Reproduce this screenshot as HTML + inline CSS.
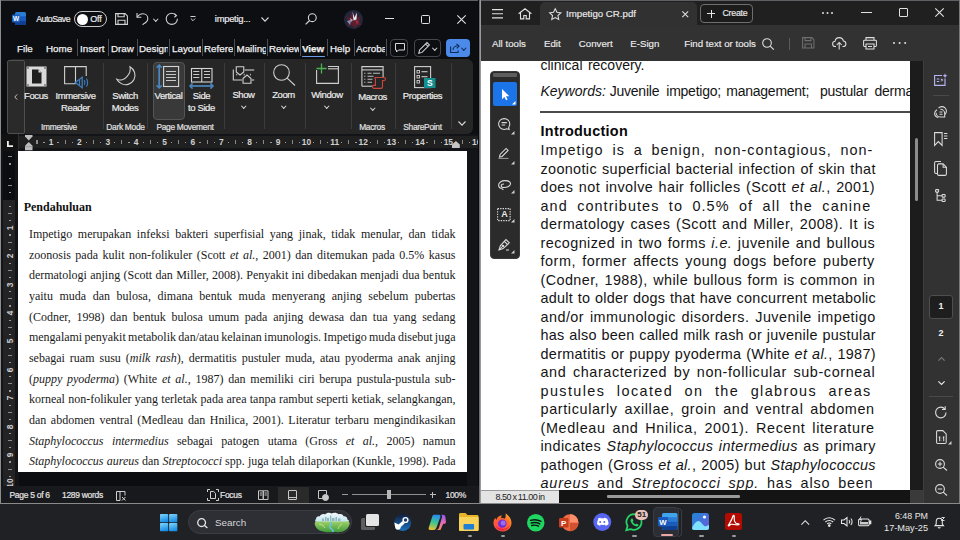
<!DOCTYPE html>
<html><head><meta charset="utf-8">
<style>
*{margin:0;padding:0;box-sizing:border-box}
html,body{width:960px;height:540px;overflow:hidden;background:#000}
body{position:relative;font-family:"Liberation Sans",sans-serif}
.a{position:absolute}
svg{position:absolute;overflow:visible}
/* WORD */
#word{left:0;top:0;width:480px;height:503px;background:#0c0e12;overflow:hidden}
.wt{position:absolute;color:#ececec;font-size:8.5px;white-space:nowrap;line-height:12px;-webkit-text-stroke:0.2px #ececec}
.tab{position:absolute;top:42px;height:13px;font-size:9.8px;line-height:13px;color:#f0f0f0;white-space:nowrap;overflow:hidden;-webkit-text-stroke:0.25px #f0f0f0}
.tsep{position:absolute;top:39px;width:1px;height:17px;background:#4c4e52}
.tbtn{position:absolute;top:39px;height:18px;border:1px solid #45474b;border-radius:4px}
#ribbon{left:7px;top:59px;width:466px;height:75px;background:#262626;border-radius:6px}
.rl{position:absolute;font-size:9.5px;letter-spacing:-0.4px;margin-top:-0.3px;line-height:12px;color:#ececec;-webkit-text-stroke:0.2px #ececec;white-space:nowrap;text-align:center;width:60px}
.gl{position:absolute;font-size:8.4px;letter-spacing:-0.3px;margin-top:-0.25px;line-height:11px;color:#e0e0e0;-webkit-text-stroke:0.2px #e0e0e0;white-space:nowrap;text-align:center;top:121.8px;width:90px}
.rsep{position:absolute;top:63px;width:1px;height:66px;background:#3c3c3c}
.chev{position:absolute;width:4px;height:4px;border-right:1px solid #d8d8d8;border-bottom:1px solid #d8d8d8;transform:rotate(45deg)}
#page{left:18px;top:151px;width:448.5px;height:321.3px;background:#fff;overflow:hidden}
.wl{position:absolute;left:10.9px;width:426.6px;font-family:"Liberation Serif",serif;font-size:12px;color:#1a1a1a;white-space:nowrap;text-align:justify;text-align-last:justify;line-height:15px}
.ws{position:absolute;font-size:8.5px;letter-spacing:-0.3px;line-height:11px;color:#e4e4e4;-webkit-text-stroke:0.2px #e4e4e4;white-space:nowrap;top:489.9px}
/* ACROBAT */
#acro{left:480px;top:0;width:480px;height:503px;background:#323232;overflow:hidden}
#apage{left:1px;top:61px;width:429.4px;height:428.6px;background:#fff;overflow:hidden}
.al{position:absolute;left:59.5px;width:400px;font-size:14.4px;color:#141414;white-space:nowrap;line-height:16px}
.ut{position:absolute;color:#ececec;font-size:9.7px;white-space:nowrap;line-height:13px;-webkit-text-stroke:0.15px #ececec}
/* TASKBAR */
#task{left:0;top:503px;width:960px;height:37px;background:#202124}
</style></head><body>

<div id="word" class="a">
  <div class="a" style="left:0;top:0;width:480px;height:1px;background:#5f5f64"></div>
  <div class="a" style="left:0;top:0;width:1.1px;height:503px;background:#8c8c8c"></div>
  <!-- title bar -->
  <svg style="left:12px;top:12px" width="14" height="13" viewBox="0 0 14 13">
    <rect x="3" y="0" width="11" height="13" rx="1.5" fill="#2b7cd3"/>
    <rect x="3" y="4.3" width="11" height="4.4" fill="#185abd"/>
    <rect x="3" y="8.7" width="11" height="4.3" rx="1" fill="#103f91"/>
    <rect x="0" y="2.5" width="8" height="8" rx="1" fill="#1a5fc4"/>
    <text x="4" y="9.2" font-size="6.5" font-weight="bold" fill="#fff" text-anchor="middle" font-family="Liberation Sans">W</text>
  </svg>
  <div class="wt" style="left:36.3px;top:13.2px;font-size:8.7px;letter-spacing:-0.5px">AutoSave</div>
  <div class="a" style="left:74px;top:11px;width:33px;height:16px;border:1px solid #c8c8c8;border-radius:8px"></div>
  <div class="a" style="left:76.5px;top:13.5px;width:11px;height:11px;border-radius:50%;background:#fff"></div>
  <div class="wt" style="left:90.3px;top:13.2px;font-size:9px;letter-spacing:-0.2px">Off</div>
  <svg style="left:115px;top:12.5px" width="13" height="12" viewBox="0 0 13 12" fill="none" stroke="#d0d0d0" stroke-width="1.1">
    <path d="M0.6 0.6h9.5l2.3 2.3v8.5H0.6z"/><path d="M3 0.6v3.2h6.2V0.6"/><path d="M3 11.4V7.2h7v4.2"/>
  </svg>
  <svg style="left:136px;top:12px" width="13" height="13" viewBox="0 0 13 13" fill="none" stroke="#d0d0d0" stroke-width="1.1">
    <path d="M1 1v4.3h4.3"/><path d="M1.2 5.2C2.5 3 4.5 1.8 7 1.8c2.8 0 4.8 2.1 4.8 4.6 0 2.2-1.5 3.9-3.6 5l-1.6 1.3"/>
  </svg>
  <div class="chev" style="left:154px;top:16.5px;width:3.5px;height:3.5px"></div>
  <svg style="left:165px;top:12px" width="14" height="13" viewBox="0 0 14 13" fill="none" stroke="#d0d0d0" stroke-width="1.1">
    <path d="M9.5 1.5l2 2.2-2.2 1.6"/><path d="M11.3 3.6C10.2 2.2 8.7 1.3 6.8 1.3 3.8 1.3 1.2 3.6 1.2 6.8s2.5 5.6 5.6 5.6 5.6-2.4 5.6-5.6"/>
  </svg>
  <svg style="left:190px;top:16px" width="6" height="6" viewBox="0 0 6 6" fill="none" stroke="#d0d0d0" stroke-width="1">
    <path d="M0.5 0.5h5"/><path d="M0.8 2.5l2.2 2.2 2.2-2.2"/>
  </svg>
  <div class="wt" style="left:214.8px;top:13.2px;font-size:9.4px;letter-spacing:-0.25px">impetig...</div>
  <svg style="left:261px;top:17px" width="8" height="5" viewBox="0 0 8 5" fill="none" stroke="#d8d8d8" stroke-width="1.1"><path d="M0.5 0.5l3.5 3.6 3.5-3.6"/></svg>
  <svg style="left:305px;top:13px" width="12" height="12" viewBox="0 0 12 12" fill="none" stroke="#d8d8d8" stroke-width="1.1">
    <circle cx="7.3" cy="4.7" r="3.9"/><path d="M4.6 7.5L0.6 11.4"/>
  </svg>
  <svg style="left:343.5px;top:9.5px" width="19" height="19" viewBox="0 0 19 19">
    <circle cx="9.5" cy="9.5" r="9.5" fill="#23263a"/>
    <path d="M2 6l4 2 1-5 3 4 2-5 1 6 4-2-2 6 3 3-5 0-2 4-3-4-4 1 1-4z" fill="#5a1e2c"/>
    <path d="M8.5 1.5l2 6 2.5-5-0.5 7-3 1z" fill="#e8e8f2"/>
    <path d="M3 11l4-1-1 5z" fill="#8890b8"/>
    <path d="M11 10l4 1-2 4z" fill="#9a2a3c"/>
    <path d="M6 8l3 2-2 2z" fill="#c8ccdc" opacity="0.8"/>
  </svg>
  <div class="a" style="left:385px;top:18px;width:8.5px;height:1px;background:#e0e0e0"></div>
  <div class="a" style="left:421px;top:15px;width:8.5px;height:8.5px;border:1px solid #e0e0e0;border-radius:1.5px"></div>
  <svg style="left:456.5px;top:14.5px" width="9" height="9" viewBox="0 0 9 9" fill="none" stroke="#e6e6e6" stroke-width="1.05"><path d="M0.3 0.3l8.4 8.4M8.7 0.3L0.3 8.7"/></svg>

  <!-- tabs -->
  <div class="tab" style="left:17px;width:20px">File</div>
  <div class="tab" style="left:46px;width:29px">Home</div>
  <div class="tsep" style="left:76.5px"></div>
  <div class="tab" style="left:80px;width:27px">Insert</div>
  <div class="tsep" style="left:108px"></div>
  <div class="tab" style="left:111px;width:25px">Draw</div>
  <div class="tsep" style="left:136.5px"></div>
  <div class="tab" style="left:139px;width:29px">Design</div>
  <div class="tsep" style="left:169px"></div>
  <div class="tab" style="left:172px;width:29px">Layout</div>
  <div class="tsep" style="left:202px"></div>
  <div class="tab" style="left:204px;width:29px">References</div>
  <div class="tsep" style="left:234px"></div>
  <div class="tab" style="left:236.5px;width:29px">Mailings</div>
  <div class="tsep" style="left:266.5px"></div>
  <div class="tab" style="left:269px;width:29.5px">Review</div>
  <div class="tsep" style="left:299.5px"></div>
  <div class="tab" style="left:302px;width:24px;font-weight:bold">View</div>
  <div class="a" style="left:302px;top:55.5px;width:22.5px;height:1.6px;background:#6c9be8;border-radius:1px"></div>
  <div class="tsep" style="left:326.5px"></div>
  <div class="tab" style="left:330px;width:23px">Help</div>
  <div class="tsep" style="left:353.5px"></div>
  <div class="tab" style="left:356px;width:29px">Acrobat</div>
  <div class="tsep" style="left:386px"></div>
  <div class="tbtn" style="left:390px;width:18px"></div>
  <svg style="left:394.5px;top:43px" width="10" height="10" viewBox="0 0 10 10" fill="none" stroke="#d8d8d8" stroke-width="1"><path d="M0.5 0.5h9v6.5H3.5L1.5 9V7H0.5z"/></svg>
  <div class="tbtn" style="left:414px;width:27px"></div>
  <svg style="left:417.5px;top:42px" width="12" height="12" viewBox="0 0 12 12" fill="none" stroke="#d8d8d8" stroke-width="1.05"><path d="M0.8 11.2l0.8-3.3L9 0.6l2.4 2.4-7.4 7.4z"/><path d="M7.6 2l2.4 2.4"/></svg>
  <div class="chev" style="left:433px;top:46px;width:3.5px;height:3.5px"></div>
  <div class="a" style="left:446px;top:39px;width:24px;height:18px;background:#4b8ae8;border-radius:4px"></div>
  <svg style="left:449.5px;top:42.5px" width="10" height="10" viewBox="0 0 10 10" fill="none" stroke="#0e2a5a" stroke-width="1.1"><path d="M0.6 3.5v6h7.5v-2"/><path d="M3 7c0-2.5 2-4 4.5-4"/><path d="M6.5 1l2.6 2.1-2.3 2.3"/></svg>
  <div class="chev" style="left:462px;top:46px;width:3.5px;height:3.5px;border-color:#0e2a5a"></div>

  <!-- ribbon -->
  <div id="ribbon" class="a"></div>
  <div class="a" style="left:7px;top:59.5px;width:18px;height:74px;border:1px solid #505050;border-radius:2px;background:#2a2a2a"></div>
  <svg style="left:14px;top:93.5px" width="4" height="6" viewBox="0 0 4 6" fill="none" stroke="#d0d0d0" stroke-width="0.9"><path d="M3.2 0.4L0.8 3l2.4 2.6"/></svg>
  <!-- Focus -->
  <svg style="left:26px;top:66px" width="21" height="21" viewBox="0 0 21 21">
    <rect x="0.5" y="0.5" width="20" height="20" fill="#d9d9d9"/>
    <rect x="1.8" y="1.8" width="17.4" height="17.4" fill="#262626" opacity="0"/>
    <path d="M6 3.5h6.5l3 3v11H6z" fill="#1e1e1e" stroke="#d9d9d9" stroke-width="0"/>
    <path d="M12.5 3.5v3h3" fill="#d9d9d9"/>
    <circle cx="2" cy="2" r="1" fill="#7a7a7a"/><circle cx="19" cy="2" r="1" fill="#7a7a7a"/><circle cx="2" cy="19" r="1" fill="#7a7a7a"/><circle cx="19" cy="19" r="1" fill="#7a7a7a"/>
  </svg>
  <div class="rl" style="left:6px;top:90.5px">Focus</div>
  <!-- Immersive reader -->
  <svg style="left:64px;top:66px" width="25" height="23" viewBox="0 0 25 23" fill="none" stroke-width="1.1">
    <path d="M11.5 17.8H0.6V0.6h10.9v17.2" stroke="#cfcfcf"/>
    <path d="M11.5 0.6h10.7v9.5" stroke="#cfcfcf"/>
    <path d="M11.2 16.5l7-5.3v10.6z" stroke="#3c7cc0" stroke-width="1.3" fill="#262626"/>
    <path d="M15.5 14v5M20.2 14.2c0.9 1.3 0.9 3.3 0 4.6M22.4 12.5c1.6 2.2 1.6 6 0 8.2" stroke="#3c7cc0" stroke-width="1.2"/>
  </svg>
  <div class="rl" style="left:45.5px;top:90.5px">Immersive</div>
  <div class="rl" style="left:45.5px;top:102.5px">Reader</div>
  <div class="gl" style="left:14px">Immersive</div>
  <div class="rsep" style="left:103px"></div>
  <!-- Switch modes -->
  <svg style="left:115.5px;top:66px" width="21" height="21" viewBox="0 0 21 21" fill="none" stroke="#cfcfcf" stroke-width="1.1">
    <path d="M14 0.8c4.5 2.5 6.3 8.2 4 12.8-2.6 5-8.7 6.5-13 3.8C3 16.2 1.6 14.8 0.8 13.2c3.5 1.6 7.8 0.5 10.3-2.8C13.5 7.6 14.8 3.8 14 0.8z"/>
  </svg>
  <div class="rl" style="left:95px;top:90.5px">Switch</div>
  <div class="rl" style="left:95px;top:102.5px">Modes</div>
  <div class="gl" style="left:80.5px">Dark Mode</div>
  <div class="rsep" style="left:146.5px"></div>
  <!-- Vertical -->
  <div class="a" style="left:153px;top:62px;width:32px;height:58px;background:#393939;border:1px solid #555;border-radius:4px"></div>
  <svg style="left:156px;top:64px" width="24" height="25" viewBox="0 0 24 25" fill="none" stroke-width="1.1">
    <path d="M3.2 1v23" stroke="#4a88c0" stroke-width="1.7"/><path d="M0.6 3.6L3.2 1l2.6 2.6M0.6 21.4L3.2 24l2.6-2.6" stroke="#4a88c0" stroke-width="1.5"/>
    <rect x="7.6" y="2.5" width="15" height="20" stroke="#d4d4d4"/>
    <path d="M10 7.5h10M10 10.5h10M10 13.5h10M10 16.5h10" stroke="#c8c8c8" stroke-width="1"/>
  </svg>
  <div class="rl" style="left:138.5px;top:90.5px">Vertical</div>
  <!-- Side to side -->
  <svg style="left:189px;top:67px" width="25" height="22" viewBox="0 0 25 22" fill="none" stroke-width="1.1">
    <rect x="2.5" y="1.5" width="20.5" height="13.5" stroke="#d4d4d4"/><path d="M12.75 1.5v13.5" stroke="#d4d4d4"/>
    <path d="M4.3 4.5h6M4.3 7.5h6M4.3 10.5h6M15 4.5h6M15 7.5h6M15 10.5h6" stroke="#c8c8c8" stroke-width="1"/>
    <path d="M1 19h23" stroke="#4a88c0" stroke-width="1.7"/><path d="M3.6 16.4L1 19l2.6 2.6M21.4 16.4L24 19l-2.6 2.6" stroke="#4a88c0" stroke-width="1.5"/>
  </svg>
  <div class="rl" style="left:171.5px;top:90.5px">Side</div>
  <div class="rl" style="left:171.5px;top:102.5px">to Side</div>
  <div class="gl" style="left:140px">Page Movement</div>
  <div class="rsep" style="left:223.5px"></div>
  <!-- Show -->
  <svg style="left:232px;top:66px" width="23" height="19" viewBox="0 0 23 19" fill="none" stroke="#cfcfcf" stroke-width="1.1">
    <path d="M12.6 4H22.2"/><path d="M4.25 0.7h7.5V6L8 9 4.25 6z"/><path d="M1.3 3.6V14H10"/>
    <path d="M11 12.5l4-3.5 4 3.5v4.8h-8z"/><path d="M19.7 14H22.2"/><path d="M4.7 7.8v1.6M12.2 7.8v1.6M18.4 7.8v1.6" stroke-width="0.9"/>
  </svg>
  <div class="rl" style="left:213.5px;top:89px">Show</div>
  <div class="chev" style="left:241.5px;top:103.5px;width:3.5px;height:3.5px"></div>
  <div class="rsep" style="left:263.5px"></div>
  <!-- Zoom -->
  <svg style="left:273px;top:63.5px" width="23" height="22" viewBox="0 0 23 22" fill="none" stroke="#cfcfcf" stroke-width="1.1">
    <circle cx="8.5" cy="8.5" r="7.8"/><path d="M14.2 14.2l7.8 7.3"/>
  </svg>
  <div class="rl" style="left:253.5px;top:89px">Zoom</div>
  <div class="chev" style="left:281.5px;top:103.5px;width:3.5px;height:3.5px"></div>
  <div class="rsep" style="left:304.5px"></div>
  <!-- Window -->
  <svg style="left:315.8px;top:63px" width="23" height="21" viewBox="0 0 23 21" fill="none" stroke-width="1.1">
    <path d="M0.6 7v13.4h21.8V3.5H12" stroke="#cfcfcf"/><path d="M12 5.8h10.4" stroke="#cfcfcf"/>
    <path d="M5.5 0.5v10M0.5 5.5h10" stroke="#4caf50" stroke-width="1.3"/>
  </svg>
  <div class="rl" style="left:297px;top:89px">Window</div>
  <div class="chev" style="left:325px;top:103.5px;width:3.5px;height:3.5px"></div>
  <div class="rsep" style="left:350.5px"></div>
  <!-- Macros -->
  <svg style="left:361px;top:66px" width="25" height="23" viewBox="0 0 25 23" fill="none" stroke-width="1.1">
    <path d="M0.9 20.2V0.6h21.2v12" stroke="#cfcfcf"/><path d="M0.9 3.9h21.2" stroke="#cfcfcf"/><path d="M0.9 20.2h11" stroke="#cfcfcf"/>
    <path d="M3.2 7.3h1.2M6.5 7.3h4M12 7.3h7M3.2 10.3h1.2M6.5 10.3h6M3.2 13.3h1.2M6.5 13.3h5M3.2 16.3h1.2M6.5 16.3h4.5" stroke="#bdbdbd"/>
    <path d="M14 11.5h9a1.5 1.5 0 0 1 0 3h-1.5v6.2a1.6 1.6 0 0 1-1.6 1.6h-7a1.5 1.5 0 0 1 0-3h1.5v-6.2A1.6 1.6 0 0 1 14 11.5z" stroke="#c9473f" stroke-width="1.15" fill="#262626"/>
  </svg>
  <div class="rl" style="left:342.5px;top:91.5px">Macros</div>
  <div class="chev" style="left:370.5px;top:105.5px;width:3.5px;height:3.5px"></div>
  <div class="gl" style="left:327px">Macros</div>
  <div class="rsep" style="left:394.5px"></div>
  <!-- Properties -->
  <svg style="left:414px;top:66px" width="22" height="22" viewBox="0 0 22 22" fill="none" stroke-width="1.1">
    <rect x="0.6" y="0.6" width="16" height="21" stroke="#cfcfcf"/>
    <rect x="3" y="4.5" width="2.5" height="2.5" stroke="#cfcfcf" stroke-width="0.9"/><path d="M7.5 5.7h6" stroke="#cfcfcf"/>
    <rect x="3" y="9.5" width="2.5" height="2.5" stroke="#cfcfcf" stroke-width="0.9"/><path d="M7.5 10.7h6" stroke="#cfcfcf"/>
    <rect x="3" y="14.5" width="2.5" height="2.5" stroke="#cfcfcf" stroke-width="0.9"/>
    <rect x="10" y="12" width="11.5" height="10" fill="#138f8f" stroke="none"/>
    <text x="15.8" y="20.3" font-size="8.5" font-weight="bold" fill="#fff" text-anchor="middle" font-family="Liberation Sans" stroke="none">S</text>
  </svg>
  <div class="rl" style="left:392.5px;top:90.5px">Properties</div>
  <div class="gl" style="left:377.5px">SharePoint</div>
  <div class="rsep" style="left:450.5px"></div>
  <svg style="left:458px;top:121px" width="8" height="5" viewBox="0 0 8 5" fill="none" stroke="#d8d8d8" stroke-width="1.1"><path d="M0.5 0.5l3.5 3.6 3.5-3.6"/></svg>

  <!-- ruler -->
<div class="a" style="left:1px;top:134px;width:478px;height:17px;background:#131417"></div>
<div class="a" style="left:19px;top:136.3px;width:460px;height:12.1px;background:#202020"></div>
<div class="a" style="left:1.3px;top:134px;width:16.8px;height:16.8px;background:#121212"></div>
<svg style="left:6.5px;top:141px" width="6" height="6" viewBox="0 0 6 6"><path d="M0 0h1.8v4.2H6V6H0z" fill="#f0f0f0"/></svg>
<div class="a" style="left:18.3px;top:134px;width:0.8px;height:17px;background:#2e2e2e"></div>
<div class="a" style="left:36.29px;top:140.2px;width:1px;height:4.2px;background:#8a8a8a"></div>
<div class="a" style="left:43.29px;top:141.8px;width:1.2px;height:1.2px;background:#9a9a9a"></div>
<div class="a" style="left:44.98px;top:138.3px;width:12px;text-align:center;font-size:8.4px;line-height:8px;color:#d0d0d0;font-weight:bold">1</div>
<div class="a" style="left:57.48px;top:141.8px;width:1.2px;height:1.2px;background:#9a9a9a"></div>
<div class="a" style="left:64.67px;top:140.2px;width:1px;height:4.2px;background:#8a8a8a"></div>
<div class="a" style="left:71.67px;top:141.8px;width:1.2px;height:1.2px;background:#9a9a9a"></div>
<div class="a" style="left:73.36px;top:138.3px;width:12px;text-align:center;font-size:8.4px;line-height:8px;color:#d0d0d0;font-weight:bold">2</div>
<div class="a" style="left:85.86px;top:141.8px;width:1.2px;height:1.2px;background:#9a9a9a"></div>
<div class="a" style="left:93.05px;top:140.2px;width:1px;height:4.2px;background:#8a8a8a"></div>
<div class="a" style="left:100.05px;top:141.8px;width:1.2px;height:1.2px;background:#9a9a9a"></div>
<div class="a" style="left:101.74px;top:138.3px;width:12px;text-align:center;font-size:8.4px;line-height:8px;color:#d0d0d0;font-weight:bold">3</div>
<div class="a" style="left:114.24px;top:141.8px;width:1.2px;height:1.2px;background:#9a9a9a"></div>
<div class="a" style="left:121.43px;top:140.2px;width:1px;height:4.2px;background:#8a8a8a"></div>
<div class="a" style="left:128.43px;top:141.8px;width:1.2px;height:1.2px;background:#9a9a9a"></div>
<div class="a" style="left:130.12px;top:138.3px;width:12px;text-align:center;font-size:8.4px;line-height:8px;color:#d0d0d0;font-weight:bold">4</div>
<div class="a" style="left:142.62px;top:141.8px;width:1.2px;height:1.2px;background:#9a9a9a"></div>
<div class="a" style="left:149.81px;top:140.2px;width:1px;height:4.2px;background:#8a8a8a"></div>
<div class="a" style="left:156.81px;top:141.8px;width:1.2px;height:1.2px;background:#9a9a9a"></div>
<div class="a" style="left:158.50px;top:138.3px;width:12px;text-align:center;font-size:8.4px;line-height:8px;color:#d0d0d0;font-weight:bold">5</div>
<div class="a" style="left:171.00px;top:141.8px;width:1.2px;height:1.2px;background:#9a9a9a"></div>
<div class="a" style="left:178.19px;top:140.2px;width:1px;height:4.2px;background:#8a8a8a"></div>
<div class="a" style="left:185.19px;top:141.8px;width:1.2px;height:1.2px;background:#9a9a9a"></div>
<div class="a" style="left:186.88px;top:138.3px;width:12px;text-align:center;font-size:8.4px;line-height:8px;color:#d0d0d0;font-weight:bold">6</div>
<div class="a" style="left:199.38px;top:141.8px;width:1.2px;height:1.2px;background:#9a9a9a"></div>
<div class="a" style="left:206.57px;top:140.2px;width:1px;height:4.2px;background:#8a8a8a"></div>
<div class="a" style="left:213.56px;top:141.8px;width:1.2px;height:1.2px;background:#9a9a9a"></div>
<div class="a" style="left:215.26px;top:138.3px;width:12px;text-align:center;font-size:8.4px;line-height:8px;color:#d0d0d0;font-weight:bold">7</div>
<div class="a" style="left:227.75px;top:141.8px;width:1.2px;height:1.2px;background:#9a9a9a"></div>
<div class="a" style="left:234.95px;top:140.2px;width:1px;height:4.2px;background:#8a8a8a"></div>
<div class="a" style="left:241.94px;top:141.8px;width:1.2px;height:1.2px;background:#9a9a9a"></div>
<div class="a" style="left:243.64px;top:138.3px;width:12px;text-align:center;font-size:8.4px;line-height:8px;color:#d0d0d0;font-weight:bold">8</div>
<div class="a" style="left:256.13px;top:141.8px;width:1.2px;height:1.2px;background:#9a9a9a"></div>
<div class="a" style="left:263.33px;top:140.2px;width:1px;height:4.2px;background:#8a8a8a"></div>
<div class="a" style="left:270.32px;top:141.8px;width:1.2px;height:1.2px;background:#9a9a9a"></div>
<div class="a" style="left:272.02px;top:138.3px;width:12px;text-align:center;font-size:8.4px;line-height:8px;color:#d0d0d0;font-weight:bold">9</div>
<div class="a" style="left:284.51px;top:141.8px;width:1.2px;height:1.2px;background:#9a9a9a"></div>
<div class="a" style="left:291.71px;top:140.2px;width:1px;height:4.2px;background:#8a8a8a"></div>
<div class="a" style="left:298.70px;top:141.8px;width:1.2px;height:1.2px;background:#9a9a9a"></div>
<div class="a" style="left:300.40px;top:138.3px;width:12px;text-align:center;font-size:8.4px;line-height:8px;color:#d0d0d0;font-weight:bold">10</div>
<div class="a" style="left:312.90px;top:141.8px;width:1.2px;height:1.2px;background:#9a9a9a"></div>
<div class="a" style="left:320.09px;top:140.2px;width:1px;height:4.2px;background:#8a8a8a"></div>
<div class="a" style="left:327.09px;top:141.8px;width:1.2px;height:1.2px;background:#9a9a9a"></div>
<div class="a" style="left:328.78px;top:138.3px;width:12px;text-align:center;font-size:8.4px;line-height:8px;color:#d0d0d0;font-weight:bold">11</div>
<div class="a" style="left:341.28px;top:141.8px;width:1.2px;height:1.2px;background:#9a9a9a"></div>
<div class="a" style="left:348.47px;top:140.2px;width:1px;height:4.2px;background:#8a8a8a"></div>
<div class="a" style="left:355.47px;top:141.8px;width:1.2px;height:1.2px;background:#9a9a9a"></div>
<div class="a" style="left:357.16px;top:138.3px;width:12px;text-align:center;font-size:8.4px;line-height:8px;color:#d0d0d0;font-weight:bold">12</div>
<div class="a" style="left:369.66px;top:141.8px;width:1.2px;height:1.2px;background:#9a9a9a"></div>
<div class="a" style="left:376.85px;top:140.2px;width:1px;height:4.2px;background:#8a8a8a"></div>
<div class="a" style="left:383.85px;top:141.8px;width:1.2px;height:1.2px;background:#9a9a9a"></div>
<div class="a" style="left:385.54px;top:138.3px;width:12px;text-align:center;font-size:8.4px;line-height:8px;color:#d0d0d0;font-weight:bold">13</div>
<div class="a" style="left:398.04px;top:141.8px;width:1.2px;height:1.2px;background:#9a9a9a"></div>
<div class="a" style="left:405.23px;top:140.2px;width:1px;height:4.2px;background:#8a8a8a"></div>
<div class="a" style="left:412.23px;top:141.8px;width:1.2px;height:1.2px;background:#9a9a9a"></div>
<div class="a" style="left:413.92px;top:138.3px;width:12px;text-align:center;font-size:8.4px;line-height:8px;color:#d0d0d0;font-weight:bold">14</div>
<div class="a" style="left:426.42px;top:141.8px;width:1.2px;height:1.2px;background:#9a9a9a"></div>
<div class="a" style="left:433.61px;top:140.2px;width:1px;height:4.2px;background:#8a8a8a"></div>
<div class="a" style="left:440.61px;top:141.8px;width:1.2px;height:1.2px;background:#9a9a9a"></div>
<div class="a" style="left:442.30px;top:138.3px;width:12px;text-align:center;font-size:8.4px;line-height:8px;color:#d0d0d0;font-weight:bold">15</div>
<div class="a" style="left:454.80px;top:141.8px;width:1.2px;height:1.2px;background:#9a9a9a"></div>
<div class="a" style="left:461.99px;top:140.2px;width:1px;height:4.2px;background:#8a8a8a"></div>
<div class="a" style="left:468.99px;top:141.8px;width:1.2px;height:1.2px;background:#9a9a9a"></div>
<div class="a" style="left:470.68px;top:138.3px;width:12px;text-align:center;font-size:8.4px;line-height:8px;color:#d0d0d0;font-weight:bold">16</div>
<div class="a" style="left:36.8px;top:140.2px;width:1px;height:4.2px;background:#8a8a8a"></div>
<div class="a" style="left:43.4px;top:141.8px;width:1.2px;height:1.2px;background:#9a9a9a"></div>
<svg style="left:25px;top:135.4px" width="7.5" height="15.2" viewBox="0 0 7.5 15.2"><path d="M0 0h7.5v1.5L3.75 5.6 0 1.5z" fill="#bdbdbd"/><path d="M3.75 7L7.5 10.8v4.4H0v-4.4z" fill="#bdbdbd"/><rect x="0" y="11.5" width="7.5" height="0.6" fill="#8a8a8a"/></svg>
<svg style="left:451.6px;top:141px" width="7.8" height="7" viewBox="0 0 7.8 7"><path d="M3.9 0L7.8 3.5V7H0V3.5z" fill="#c4c4c4"/></svg>
<div class="a" style="left:1px;top:151px;width:17.5px;height:335px;background:#131417"></div>
<div class="a" style="left:3px;top:151px;width:12.2px;height:48.5px;background:#0c0d10"></div>
<div class="a" style="left:3px;top:199.5px;width:12.2px;height:286.5px;background:#232323"></div>
<div class="a" style="left:8px;top:156.43px;width:4px;height:1px;background:#8a8a8a"></div>
<div class="a" style="left:9.4px;top:163.43px;width:1.2px;height:1.2px;background:#9a9a9a"></div>
<div class="a" style="left:9.4px;top:177.62px;width:1.2px;height:1.2px;background:#9a9a9a"></div>
<div class="a" style="left:8px;top:184.81px;width:4px;height:1px;background:#8a8a8a"></div>
<div class="a" style="left:9.4px;top:191.81px;width:1.2px;height:1.2px;background:#9a9a9a"></div>
<div class="a" style="left:9.4px;top:206.00px;width:1.2px;height:1.2px;background:#9a9a9a"></div>
<div class="a" style="left:8px;top:213.19px;width:4px;height:1px;background:#8a8a8a"></div>
<div class="a" style="left:9.4px;top:220.19px;width:1.2px;height:1.2px;background:#9a9a9a"></div>
<div class="a" style="left:4px;top:221.88px;width:12px;height:12px;display:flex;align-items:center;justify-content:center"><div style="transform:rotate(-90deg);font-size:8.4px;line-height:8px;color:#d0d0d0;font-weight:bold">1</div></div>
<div class="a" style="left:9.4px;top:234.38px;width:1.2px;height:1.2px;background:#9a9a9a"></div>
<div class="a" style="left:8px;top:241.57px;width:4px;height:1px;background:#8a8a8a"></div>
<div class="a" style="left:9.4px;top:248.56px;width:1.2px;height:1.2px;background:#9a9a9a"></div>
<div class="a" style="left:4px;top:250.26px;width:12px;height:12px;display:flex;align-items:center;justify-content:center"><div style="transform:rotate(-90deg);font-size:8.4px;line-height:8px;color:#d0d0d0;font-weight:bold">2</div></div>
<div class="a" style="left:9.4px;top:262.75px;width:1.2px;height:1.2px;background:#9a9a9a"></div>
<div class="a" style="left:8px;top:269.95px;width:4px;height:1px;background:#8a8a8a"></div>
<div class="a" style="left:9.4px;top:276.94px;width:1.2px;height:1.2px;background:#9a9a9a"></div>
<div class="a" style="left:4px;top:278.64px;width:12px;height:12px;display:flex;align-items:center;justify-content:center"><div style="transform:rotate(-90deg);font-size:8.4px;line-height:8px;color:#d0d0d0;font-weight:bold">3</div></div>
<div class="a" style="left:9.4px;top:291.13px;width:1.2px;height:1.2px;background:#9a9a9a"></div>
<div class="a" style="left:8px;top:298.33px;width:4px;height:1px;background:#8a8a8a"></div>
<div class="a" style="left:9.4px;top:305.32px;width:1.2px;height:1.2px;background:#9a9a9a"></div>
<div class="a" style="left:4px;top:307.02px;width:12px;height:12px;display:flex;align-items:center;justify-content:center"><div style="transform:rotate(-90deg);font-size:8.4px;line-height:8px;color:#d0d0d0;font-weight:bold">4</div></div>
<div class="a" style="left:9.4px;top:319.51px;width:1.2px;height:1.2px;background:#9a9a9a"></div>
<div class="a" style="left:8px;top:326.71px;width:4px;height:1px;background:#8a8a8a"></div>
<div class="a" style="left:9.4px;top:333.70px;width:1.2px;height:1.2px;background:#9a9a9a"></div>
<div class="a" style="left:4px;top:335.40px;width:12px;height:12px;display:flex;align-items:center;justify-content:center"><div style="transform:rotate(-90deg);font-size:8.4px;line-height:8px;color:#d0d0d0;font-weight:bold">5</div></div>
<div class="a" style="left:9.4px;top:347.89px;width:1.2px;height:1.2px;background:#9a9a9a"></div>
<div class="a" style="left:8px;top:355.09px;width:4px;height:1px;background:#8a8a8a"></div>
<div class="a" style="left:9.4px;top:362.08px;width:1.2px;height:1.2px;background:#9a9a9a"></div>
<div class="a" style="left:4px;top:363.78px;width:12px;height:12px;display:flex;align-items:center;justify-content:center"><div style="transform:rotate(-90deg);font-size:8.4px;line-height:8px;color:#d0d0d0;font-weight:bold">6</div></div>
<div class="a" style="left:9.4px;top:376.27px;width:1.2px;height:1.2px;background:#9a9a9a"></div>
<div class="a" style="left:8px;top:383.47px;width:4px;height:1px;background:#8a8a8a"></div>
<div class="a" style="left:9.4px;top:390.46px;width:1.2px;height:1.2px;background:#9a9a9a"></div>
<div class="a" style="left:4px;top:392.16px;width:12px;height:12px;display:flex;align-items:center;justify-content:center"><div style="transform:rotate(-90deg);font-size:8.4px;line-height:8px;color:#d0d0d0;font-weight:bold">7</div></div>
<div class="a" style="left:9.4px;top:404.65px;width:1.2px;height:1.2px;background:#9a9a9a"></div>
<div class="a" style="left:8px;top:411.85px;width:4px;height:1px;background:#8a8a8a"></div>
<div class="a" style="left:9.4px;top:418.84px;width:1.2px;height:1.2px;background:#9a9a9a"></div>
<div class="a" style="left:4px;top:420.54px;width:12px;height:12px;display:flex;align-items:center;justify-content:center"><div style="transform:rotate(-90deg);font-size:8.4px;line-height:8px;color:#d0d0d0;font-weight:bold">8</div></div>
<div class="a" style="left:9.4px;top:433.03px;width:1.2px;height:1.2px;background:#9a9a9a"></div>
<div class="a" style="left:8px;top:440.23px;width:4px;height:1px;background:#8a8a8a"></div>
<div class="a" style="left:9.4px;top:447.22px;width:1.2px;height:1.2px;background:#9a9a9a"></div>
<div class="a" style="left:4px;top:448.92px;width:12px;height:12px;display:flex;align-items:center;justify-content:center"><div style="transform:rotate(-90deg);font-size:8.4px;line-height:8px;color:#d0d0d0;font-weight:bold">9</div></div>
<div class="a" style="left:9.4px;top:461.41px;width:1.2px;height:1.2px;background:#9a9a9a"></div>
<div class="a" style="left:8px;top:468.61px;width:4px;height:1px;background:#8a8a8a"></div>
<div class="a" style="left:9.4px;top:475.60px;width:1.2px;height:1.2px;background:#9a9a9a"></div>
<div class="a" style="left:4px;top:477.30px;width:12px;height:12px;display:flex;align-items:center;justify-content:center"><div style="transform:rotate(-90deg);font-size:8.4px;line-height:8px;color:#d0d0d0;font-weight:bold">10</div></div>
<div class="a" style="left:466.2px;top:151px;width:12.8px;height:335px;background:#131417"></div>
<div class="a" style="left:18.5px;top:473px;width:448px;height:13px;background:#0c0d10"></div>
<div class="a" style="left:478.1px;top:0px;width:0.9px;height:503px;background:#08090c"></div><div class="a" style="left:479px;top:0px;width:1px;height:503px;background:#6e6e73"></div>
  <div id="page" class="a">
  <div class="a" style="left:5.7px;top:48.5px;font-family:'Liberation Serif',serif;font-weight:bold;font-size:12px;color:#111;line-height:15px;white-space:nowrap">Pendahuluan</div>
<div class="wl" style="top:75.92px">Impetigo merupakan infeksi bakteri superfisial yang jinak, tidak menular, dan tidak</div>
<div class="wl" style="top:96.59px">zoonosis pada kulit non-folikuler (Scott <i>et al.</i>, 2001) dan ditemukan pada 0.5% kasus</div>
<div class="wl" style="top:117.26px">dermatologi anjing (Scott dan Miller, 2008). Penyakit ini dibedakan menjadi dua bentuk</div>
<div class="wl" style="top:137.93px">yaitu muda dan bulosa, dimana bentuk muda menyerang anjing sebelum pubertas</div>
<div class="wl" style="top:158.60px">(Codner, 1998) dan bentuk bulosa umum pada anjing dewasa dan tua yang sedang</div>
<div class="wl" style="top:179.27px;word-spacing:-0.75px">mengalami penyakit metabolik dan/atau kelainan imunologis. Impetigo muda disebut juga</div>
<div class="wl" style="top:199.94px">sebagai ruam susu (<i>milk rash</i>), dermatitis pustuler muda, atau pyoderma anak anjing</div>
<div class="wl" style="top:220.61px">(<i>puppy pyoderma</i>) (White <i>et al.</i>, 1987) dan memiliki ciri berupa pustula-pustula sub-</div>
<div class="wl" style="top:241.28px">korneal non-folikuler yang terletak pada area tanpa rambut seperti ketiak, selangkangan,</div>
<div class="wl" style="top:261.95px">dan abdomen ventral (Medleau dan Hnilica, 2001). Literatur terbaru mengindikasikan</div>
<div class="wl" style="top:282.62px"><i>Staphylococcus intermedius</i> sebagai patogen utama (Gross <i>et al.</i>, 2005) namun</div>
<div class="wl" style="top:303.29px"><i>Staphylococcus aureus</i> dan <i>Streptococci</i> spp. juga telah dilaporkan (Kunkle, 1998). Pada</div>

  </div>
  <div class="a" style="left:1px;top:486px;width:478px;height:17px;background:#18191c"></div>
  <div class="ws" style="left:9.5px">Page 5 of 6</div>
  <div class="ws" style="left:62px">1289 words</div>
  <svg style="left:116px;top:491px" width="12" height="10" viewBox="0 0 12 10" fill="none" stroke="#d0d0d0" stroke-width="1">
    <path d="M0.5 0.5h3.5v9H0.5z"/><path d="M4 0.5h5v4"/><path d="M6 6l3.5 3.5M9.5 6L6 9.5"/>
  </svg>
  <svg style="left:206.5px;top:489px" width="12" height="12" viewBox="0 0 12 12" fill="none" stroke="#d0d0d0" stroke-width="1">
    <path d="M0.5 3V0.5H3M9 0.5h2.5V3M11.5 9v2.5H9M3 11.5H0.5V9"/><path d="M3.5 2.5h3.2l1.8 1.8v5.2h-5z"/>
  </svg>
  <div class="ws" style="left:220px">Focus</div>
  <svg style="left:257.5px;top:490px" width="10.5" height="10" viewBox="0 0 10.5 10" fill="none" stroke="#c8c8c8" stroke-width="1">
    <path d="M0.5 0.8h4.7v8.7H0.5zM5.3 0.8H10v8.7H5.3z"/><path d="M1.8 3h2.3M1.8 5h2.3M6.5 3h2.3M6.5 5h2.3"/>
  </svg>
  <div class="a" style="left:277.5px;top:486.5px;width:31px;height:16px;background:#2a2a2a"></div>
  <svg style="left:288px;top:490px" width="9" height="10" viewBox="0 0 9 10" fill="none" stroke="#c8c8c8" stroke-width="1"><rect x="0.5" y="0.5" width="8" height="9" rx="0.5"/><path d="M0.5 7.5h8" /></svg>
  <svg style="left:317.5px;top:489.5px" width="11" height="11" viewBox="0 0 11 11" fill="none" stroke="#c8c8c8" stroke-width="1"><path d="M0.5 0.5h8v4M0.5 0.5v8h4"/><circle cx="7.5" cy="7.5" r="3" fill="#c8c8c8"/></svg>
  <div class="a" style="left:341.7px;top:494.3px;width:6px;height:1px;background:#9a9a9a"></div>
  <div class="a" style="left:351.7px;top:494.2px;width:74px;height:1.2px;background:#8f8f8f"></div>
  <div class="a" style="left:386.7px;top:490.3px;width:4px;height:9px;background:#b8b8b8"></div>
  <div class="a" style="left:429.7px;top:494.3px;width:6px;height:1px;background:#bdbdbd"></div>
  <div class="a" style="left:432.2px;top:491.8px;width:1px;height:6px;background:#bdbdbd"></div>
  <div class="ws" style="left:445.5px">100%</div>

</div>

<div id="acro" class="a">
  <div class="a" style="left:0;top:0;width:480px;height:25.2px;background:#202020"></div>
  <div class="a" style="left:0;top:0;width:480px;height:1px;background:#5f5f64"></div>
  <div class="a" style="left:0;top:0;width:1.1px;height:503px;background:#9a9a9e"></div>
  <div class="a" style="left:478.7px;top:0;width:1.3px;height:503px;background:#7a7a7a"></div>
  <!-- hamburger / home -->
  <svg style="left:12px;top:9px" width="11" height="9.5" viewBox="0 0 11 9.5" fill="none" stroke="#e0e0e0" stroke-width="1.1"><path d="M0 0.6h11M0 4.75h11M0 8.9h11"/></svg>
  <svg style="left:38px;top:7.6px" width="14" height="11.5" viewBox="0 0 14 11.5" fill="none" stroke="#e0e0e0" stroke-width="1.1"><path d="M0.6 5.8L7 0.7l6.4 5.1M2.5 4.6v6.3h3.3V7.5h2.4v3.4h3.3V4.6"/></svg>
  <!-- active tab -->
  <div class="a" style="left:60px;top:2px;width:157px;height:24px;background:#313131;border-radius:5px 5px 0 0"></div>
  <svg style="left:68.5px;top:8px" width="12.5" height="12" viewBox="0 0 12.5 12" fill="none" stroke="#e0e0e0" stroke-width="1.05"><path d="M6.25 0.7l1.7 3.6 3.9 0.5-2.9 2.7 0.8 3.9-3.5-1.9-3.5 1.9 0.8-3.9L0.65 4.8l3.9-0.5z"/></svg>
  <div class="ut" style="left:86px;top:6.5px">Impetigo CR.pdf</div>
  <svg style="left:202px;top:10.7px" width="6.5" height="6.5" viewBox="0 0 6.5 6.5" fill="none" stroke="#e0e0e0" stroke-width="1.05"><path d="M0.3 0.3l5.9 5.9M6.2 0.3L0.3 6.2"/></svg>
  <div class="a" style="left:220px;top:4.4px;width:53px;height:18.4px;border:1px solid #6e6e6e;border-radius:4px;background:#1c1c1c"></div>
  <div class="a" style="left:227px;top:13px;width:8.3px;height:1.1px;background:#e6e6e6"></div>
  <div class="a" style="left:230.6px;top:9.6px;width:1.1px;height:8px;background:#e6e6e6"></div>
  <div class="ut" style="left:242.5px;top:7.2px;font-size:8.8px;letter-spacing:-0.25px">Create</div>
  <div class="a" style="left:342px;top:11.8px;width:2px;height:2px;border-radius:1px;background:#e0e0e0;box-shadow:4.5px 0 0 #e0e0e0,9px 0 0 #e0e0e0"></div>
  <div class="a" style="left:381.3px;top:12.1px;width:10.7px;height:1.1px;background:#e0e0e0"></div>
  <div class="a" style="left:418.8px;top:7.8px;width:9.2px;height:8.9px;border:1.1px solid #e0e0e0;border-radius:1px"></div>
  <svg style="left:455.3px;top:7.8px" width="9" height="9" viewBox="0 0 9 9" fill="none" stroke="#e6e6e6" stroke-width="1.05"><path d="M0.3 0.3l8.4 8.4M8.7 0.3L0.3 8.7"/></svg>
  <!-- toolbar -->
  <div class="ut" style="left:12px;top:36.9px">All tools</div>
  <div class="ut" style="left:64px;top:36.9px">Edit</div>
  <div class="ut" style="left:98.8px;top:36.9px">Convert</div>
  <div class="ut" style="left:150.3px;top:36.9px">E-Sign</div>
  <div class="ut" style="left:204.3px;top:36.9px">Find text or tools</div>
  <svg style="left:282px;top:38px" width="12.5" height="12" viewBox="0 0 12.5 12" fill="none" stroke="#e0e0e0" stroke-width="1.1"><circle cx="5" cy="5" r="4.3"/><path d="M8.2 8.2l3.6 3.4"/></svg>
  <div class="a" style="left:309.2px;top:37.5px;width:0.9px;height:12.5px;background:#5a5a5a"></div>
  <svg style="left:321.7px;top:37px" width="12.5" height="11.5" viewBox="0 0 12.5 11.5" fill="none" stroke="#6f6f6f" stroke-width="1.05"><path d="M0.6 0.6h9.3l2 2v8.3H0.6z"/><path d="M3 0.6v3h6V0.6M3 10.9V7h6.5v3.9"/></svg>
  <svg style="left:352px;top:37px" width="14.5" height="13" viewBox="0 0 14.5 13" fill="none" stroke="#e0e0e0" stroke-width="1.05"><path d="M4 9.5H3.2C1.7 9.5 0.6 8.3 0.6 6.9c0-1.4 1.1-2.5 2.4-2.6C3.4 2.2 5.1 0.6 7.2 0.6c2.1 0 3.8 1.5 4.2 3.5 1.4 0.2 2.5 1.3 2.5 2.8 0 1.4-1.2 2.6-2.6 2.6H10.5"/><path d="M7.2 12.5V5.5M4.7 8l2.5-2.5L9.7 8"/></svg>
  <svg style="left:383px;top:37px" width="14" height="12.5" viewBox="0 0 14 12.5" fill="none" stroke="#e0e0e0" stroke-width="1.05"><path d="M3 3.2V0.6h8v2.6"/><path d="M3 9.5H1.5C1 9.5 0.6 9.1 0.6 8.6V4.1c0-0.5 0.4-0.9 0.9-0.9h11c0.5 0 0.9 0.4 0.9 0.9v4.5c0 0.5-0.4 0.9-0.9 0.9H11"/><path d="M3 7h8v5H3z"/><path d="M5 9.5h4"/></svg>
  <div class="a" style="left:412.5px;top:41.8px;width:2.2px;height:2.2px;border-radius:1.1px;background:#e0e0e0;box-shadow:5.6px 0 0 #e0e0e0,11.2px 0 0 #e0e0e0"></div>

  <div id="apage" class="a">
  <div class="a" style="left:59.5px;top:-4.35px;font-size:14px;line-height:16px;color:#141414;white-space:nowrap;word-spacing:1.5px;letter-spacing:0px">clinical recovery.</div>
  <div class="a" style="left:59.5px;top:21.75px;font-size:14px;line-height:16px;color:#141414;white-space:nowrap;font-style:italic;letter-spacing:0px">Keywords:</div>
  <div class="a" style="left:128.8px;top:21.75px;font-size:14px;line-height:16px;color:#141414;white-space:nowrap;letter-spacing:-0.25px">Juvenile</div>
  <div class="a" style="left:185.3px;top:21.75px;font-size:14px;line-height:16px;color:#141414;white-space:nowrap;letter-spacing:-0.25px">impetigo;</div>
  <div class="a" style="left:245.3px;top:21.75px;font-size:14px;line-height:16px;color:#141414;white-space:nowrap;letter-spacing:-0.25px">management;</div>
  <div class="a" style="left:339px;top:21.75px;font-size:14px;line-height:16px;color:#141414;white-space:nowrap;letter-spacing:-0.25px">pustular</div>
  <div class="a" style="left:393.5px;top:21.75px;font-size:14px;line-height:16px;color:#141414;white-space:nowrap;letter-spacing:-0.25px">dermatitis</div>
  <div class="a" style="left:59.2px;top:50px;width:380px;height:2px;background:#4a4a4a"></div>
  <div class="a" style="left:59.5px;top:61.9px;font-size:14.4px;line-height:16px;color:#0a0a0a;white-space:nowrap;font-weight:bold;letter-spacing:0.3px">Introduction</div>

<div class="al" style="top:81.20px;letter-spacing:0.983px;word-spacing:3.914px">Impetigo is a benign, non-contagious, non-</div>
<div class="al" style="top:99.71px;letter-spacing:0.353px;word-spacing:0.763px">zoonotic superficial bacterial infection of skin that</div>
<div class="al" style="top:118.22px;letter-spacing:0.410px;word-spacing:1.051px">does not involve hair follicles (Scott <i>et al.</i>, 2001)</div>
<div class="al" style="top:136.73px;letter-spacing:1.075px;word-spacing:4.377px">and contributes to 0.5% of all the canine</div>
<div class="al" style="top:155.24px;letter-spacing:0.456px;word-spacing:1.281px">dermatology cases (Scott and Miller, 2008). It is</div>
<div class="al" style="top:173.75px;letter-spacing:0.429px;word-spacing:1.145px">recognized in two forms <i>i.e.</i> juvenile and bullous</div>
<div class="al" style="top:192.26px;letter-spacing:0.535px;word-spacing:1.673px">form, former affects young dogs before puberty</div>
<div class="al" style="top:210.77px;letter-spacing:0.412px;word-spacing:1.060px">(Codner, 1988), while bullous form is common in</div>
<div class="al" style="top:229.28px;letter-spacing:0.275px;word-spacing:0.374px">adult to older dogs that have concurrent metabolic</div>
<div class="al" style="top:247.79px;letter-spacing:0.466px;word-spacing:1.332px">and/or immunologic disorders. Juvenile impetigo</div>
<div class="al" style="top:266.30px;letter-spacing:0.284px;word-spacing:0.419px">has also been called milk rash or juvenile pustular</div>
<div class="al" style="top:284.81px;letter-spacing:0.314px;word-spacing:0.568px">dermatitis or puppy pyoderma (White <i>et al.</i>, 1987)</div>
<div class="al" style="top:303.32px;letter-spacing:0.603px;word-spacing:2.016px">and characterized by non-follicular sub-corneal</div>
<div class="al" style="top:321.83px;letter-spacing:1.412px;word-spacing:6.058px">pustules located on the glabrous areas</div>
<div class="al" style="top:340.34px;letter-spacing:0.634px;word-spacing:2.172px">particularly axillae, groin and ventral abdomen</div>
<div class="al" style="top:358.85px;letter-spacing:0.643px;word-spacing:2.215px">(Medleau and Hnilica, 2001). Recent literature</div>
<div class="al" style="top:377.36px;letter-spacing:0.421px;word-spacing:1.103px">indicates <i>Staphylococcus intermedius</i> as primary</div>
<div class="al" style="top:395.87px;letter-spacing:0.325px;word-spacing:0.626px">pathogen (Gross <i>et al.</i>, 2005) but <i>Staphylococcus</i></div>
<div class="al" style="top:414.38px;letter-spacing:0.818px;word-spacing:3.088px"><i>aureus</i> and <i>Streptococci spp.</i> has also been</div>
  </div>
  <!-- floating tools panel -->
  <div class="a" style="left:10.2px;top:70.7px;width:29.6px;height:188.6px;background:#2b2b2b;border-radius:4px;border:1px solid #3a3a3a"></div>
  <div class="a" style="left:13px;top:73.3px;width:24px;height:3.4px;background:#5e5e5e;border-radius:1px"></div>
  <div class="a" style="left:13px;top:82.2px;width:23.7px;height:24.1px;background:#1b74e8;border-radius:2px"></div>
  <svg style="left:21.8px;top:88.7px" width="7" height="11" viewBox="0 0 7 11"><path d="M0 0v10.2l2.4-2.3 1.7 3.4 1.5-0.7-1.6-3.3h3.3z" fill="#fff"/></svg>
  <svg style="left:31.5px;top:101px" width="3.5" height="3.5" viewBox="0 0 3.5 3.5"><path d="M3.5 0v3.5H0z" fill="#fff"/></svg>
  <svg style="left:18px;top:118.3px" width="13" height="12" viewBox="0 0 13 12" fill="none" stroke="#dcdcdc" stroke-width="1.05"><path d="M6.2 0.6C9.3 0.6 11.8 3 11.8 6c0 1.2-0.4 2.3-1.1 3.2l0.4 2.3-2.4-0.7c-0.8 0.4-1.6 0.6-2.5 0.6C3.1 11.4 0.6 9 0.6 6S3.1 0.6 6.2 0.6z"/><path d="M3.6 4.6h5.2M3.6 7h3.6"/></svg>
  <svg style="left:31px;top:130.5px" width="3.5" height="3.5" viewBox="0 0 3.5 3.5"><path d="M3.5 0v3.5H0z" fill="#cfcfcf"/></svg>
  <svg style="left:18px;top:148.4px" width="13" height="11" viewBox="0 0 13 11" fill="none" stroke="#dcdcdc" stroke-width="1.05"><path d="M1.5 9l0.6-2.6 6-6 2 2-6 6z"/><path d="M0.5 10.4h10" stroke="#9a9a9a"/></svg>
  <svg style="left:31px;top:161px" width="3.5" height="3.5" viewBox="0 0 3.5 3.5"><path d="M3.5 0v3.5H0z" fill="#cfcfcf"/></svg>
  <svg style="left:18px;top:179.8px" width="13" height="10" viewBox="0 0 13 10" fill="none" stroke="#dcdcdc" stroke-width="1.05"><path d="M3.5 8.5C1.7 8 0.6 6.7 0.6 5.2 0.6 2.7 3.4 0.6 7 0.6s5.5 1.6 5.5 3.2c0 2.3-3.4 3.7-6.5 3.7-1.6 0-2.8-0.7-2.8-1.8 0-1 1.2-1.8 2.8-1.8"/><path d="M3.5 8.5c0.8 0.4 1.5 0.9 1.8 1.4"/></svg>
  <svg style="left:31px;top:190px" width="3.5" height="3.5" viewBox="0 0 3.5 3.5"><path d="M3.5 0v3.5H0z" fill="#cfcfcf"/></svg>
  <svg style="left:17.3px;top:207.5px" width="14.5" height="13.2" viewBox="0 0 14.5 13.2" fill="none" stroke="#dcdcdc" stroke-width="1.1" stroke-dasharray="1.4 1.1"><rect x="0.6" y="0.6" width="12.5" height="12"/></svg>
  <div class="a" style="left:17.3px;top:207.5px;width:14.5px;height:13.2px;font-size:9px;line-height:13.2px;text-align:center;color:#e8e8e8;font-weight:bold">A</div>
  <svg style="left:31px;top:219px" width="3.5" height="3.5" viewBox="0 0 3.5 3.5"><path d="M3.5 0v3.5H0z" fill="#cfcfcf"/></svg>
  <svg style="left:18px;top:238.8px" width="13" height="12" viewBox="0 0 13 12" fill="none" stroke="#dcdcdc" stroke-width="1.05"><path d="M1 11l1.3-4.2 4-4.5 3.3 3.2-4.5 4.1z"/><path d="M6.3 2.3l1.7-1.7 3.3 3.2-1.7 1.7"/><path d="M1 11l3-3"/><circle cx="5" cy="7" r="0.8"/><path d="M8 11h3"/></svg>
  <svg style="left:31px;top:250px" width="3.5" height="3.5" viewBox="0 0 3.5 3.5"><path d="M3.5 0v3.5H0z" fill="#cfcfcf"/></svg>
  <!-- right vertical scroll strip -->
  <div class="a" style="left:430.4px;top:61px;width:13px;height:428.6px;background:#1c1c1c"></div>
  <div class="a" style="left:435px;top:137.6px;width:3px;height:63.5px;background:#8c8c8c;border-radius:1.5px"></div>
  <!-- sidebar -->
  <div class="a" style="left:443.3px;top:61px;width:35.4px;height:442px;background:#323232;border-left:1px solid #3e3e3e"></div>
  <svg style="left:454px;top:73px" width="14" height="13" viewBox="0 0 14 13" fill="none" stroke="#b4b4f0" stroke-width="1.15"><path d="M11 5.5v6.9H0.6V2.5H8"/><path d="M2.8 6h2.5M2.8 8.5h2.5M7 6l1.5 1-1.5 1"/><path d="M11 0.3l0.7 1.8 1.8 0.7-1.8 0.7L11 5.3l-0.7-1.8-1.8-0.7 1.8-0.7z" fill="#b4b4f0" stroke="none"/></svg>
  <div class="a" style="left:453px;top:95px;width:16px;height:0.9px;background:#4a4a4a"></div>
  <svg style="left:454px;top:106px" width="13" height="11.5" viewBox="0 0 13 11.5" fill="none" stroke="#dcdcdc" stroke-width="1.05"><path d="M4.5 2.2C5.3 1.2 6.5 0.6 7.8 0.6c2.5 0 4.6 2 4.6 4.5 0 1.3-0.5 2.4-1.4 3.2"/><path d="M6.4 3.3c2.4 0 4.3 1.9 4.3 4.2v3.4H6.4c-2.4 0-4.3-1.9-4.3-4.2"/><path d="M3 3.8C1.6 4.6 0.6 6 0.6 7.6c0 2.2 1.8 3.6 3.8 3.8"/><path d="M5.5 6h3M5.5 8.2h3"/></svg>
  <svg style="left:453.7px;top:132px" width="14" height="14" viewBox="0 0 14 14" fill="none" stroke="#dcdcdc" stroke-width="1.05"><path d="M0.6 0.6h7.5v12.8L4.35 9.6 0.6 13.4z"/><path d="M10 1.5h3.4M10 4h3.4M10 6.5h3.4"/></svg>
  <svg style="left:454px;top:160.7px" width="13" height="14.8" viewBox="0 0 13 14.8" fill="none" stroke="#dcdcdc" stroke-width="1.05"><path d="M3 12.5H2C1.2 12.5 0.6 11.9 0.6 11.1V2C0.6 1.2 1.2 0.6 2 0.6h5"/><path d="M3.5 4.3c0-0.8 0.6-1.4 1.4-1.4h4.2l3.3 3.3v6.8c0 0.8-0.6 1.4-1.4 1.4H4.9c-0.8 0-1.4-0.6-1.4-1.4z"/><path d="M9.1 2.9v3.3h3.3"/></svg>
  <svg style="left:454.6px;top:189.4px" width="12.5" height="13" viewBox="0 0 12.5 13" fill="none" stroke="#dcdcdc" stroke-width="1.05"><rect x="0.6" y="0.6" width="3" height="2.5" rx="0.5"/><path d="M2.1 3.1v8.1h5M2.1 6.8h5"/><rect x="7.1" y="5.5" width="3" height="2.6" rx="0.5"/><rect x="7.1" y="9.9" width="3" height="2.6" rx="0.5"/></svg>
  <!-- page nav -->
  <div class="a" style="left:448.9px;top:295px;width:24px;height:24px;background:#1e1e1e;border:1px solid #4e4e4e;border-radius:3px"></div>
  <div class="a" style="left:448.9px;top:300px;width:24px;text-align:center;font-size:9px;line-height:13px;color:#f0f0f0;font-weight:bold">1</div>
  <div class="a" style="left:449px;top:326.5px;width:24px;text-align:center;font-size:9px;line-height:13px;color:#f0f0f0;font-weight:bold">2</div>
  <svg style="left:457.5px;top:356.5px" width="7" height="4" viewBox="0 0 7 4" fill="none" stroke="#7a7a7a" stroke-width="1.1"><path d="M0.4 3.6l3.1-3.1 3.1 3.1"/></svg>
  <svg style="left:457.5px;top:381px" width="7" height="4" viewBox="0 0 7 4" fill="none" stroke="#e6e6e6" stroke-width="1.2"><path d="M0.4 0.4l3.1 3.1 3.1-3.1"/></svg>
  <div class="a" style="left:449px;top:396.2px;width:24px;height:0.9px;background:#4a4a4a"></div>
  <svg style="left:455px;top:405.5px" width="12" height="12.5" viewBox="0 0 12 12.5" fill="none" stroke="#dcdcdc" stroke-width="1.1"><path d="M11 6.5c0 3-2.4 5.4-5.2 5.4S0.6 9.5 0.6 6.5 3 1.1 5.8 1.1c1.7 0 3.2 0.8 4.1 2.1"/><path d="M10.2 0.3v3.2H7"/></svg>
  <svg style="left:455.5px;top:430px" width="16" height="15" viewBox="0 0 16 15" fill="none" stroke="#dcdcdc" stroke-width="1.05"><path d="M0.6 1.8C0.6 1.1 1.1 0.6 1.8 0.6h5l3.4 3.4v8.2c0 0.7-0.5 1.2-1.2 1.2H1.8c-0.7 0-1.2-0.5-1.2-1.2z"/><path d="M2.8 7.5l0.9-0.6v4.3M5.4 8v0.2M5.4 10.6v0.2M6.8 7.5l0.9-0.6v4.3"/><path d="M15.5 11v3.5H12z" fill="#cfcfcf" stroke="none"/></svg>
  <svg style="left:455px;top:459px" width="13" height="12" viewBox="0 0 13 12" fill="none" stroke="#dcdcdc" stroke-width="1.1"><circle cx="5" cy="5" r="4.4"/><path d="M8.2 8.2l3.8 3.3M5 2.8v4.4M2.8 5h4.4"/></svg>
  <svg style="left:455px;top:484.4px" width="13" height="12" viewBox="0 0 13 12" fill="none" stroke="#dcdcdc" stroke-width="1.1"><circle cx="5" cy="5" r="4.4"/><path d="M8.2 8.2l3.8 3.3M2.8 5h4.4"/></svg>
  <!-- bottom bar -->
  <div class="a" style="left:1.1px;top:489.6px;width:429.4px;height:13.4px;background:#141414"></div>
  <div class="a" style="left:1.1px;top:490.4px;width:78.3px;height:12.6px;background:#e4e4e4;border-top:1px solid #9a9a9a"></div>
  <div class="a" style="left:15.5px;top:492px;font-size:9px;line-height:11px;color:#222;white-space:nowrap;letter-spacing:-0.5px;word-spacing:-0.6px">8.50 x 11.00 in</div>
  <div class="a" style="left:127.3px;top:495.4px;width:133px;height:2.2px;background:#9a9a9a;border-radius:1.1px"></div>
  <div class="a" style="left:430px;top:489.6px;width:13px;height:13.4px;background:#3a3a3a"></div>

</div>

<div id="task" class="a">
  <div class="a" style="left:0;top:0;width:960px;height:1px;background:#8a8a8a"></div>
  <!-- windows logo -->
  <svg style="left:160px;top:10.75px" width="17.3" height="17.3" viewBox="0 0 17.3 17.3">
    <defs><linearGradient id="wg" x1="0" y1="0" x2="0.3" y2="1"><stop offset="0" stop-color="#7fd6fb"/><stop offset="1" stop-color="#1b8fe6"/></linearGradient></defs>
    <rect x="0" y="0" width="8.2" height="8.2" rx="0.8" fill="url(#wg)"/><rect x="9.1" y="0" width="8.2" height="8.2" rx="0.8" fill="url(#wg)"/>
    <rect x="0" y="9.1" width="8.2" height="8.2" rx="0.8" fill="url(#wg)"/><rect x="9.1" y="9.1" width="8.2" height="8.2" rx="0.8" fill="url(#wg)"/>
  </svg>
  <!-- search -->
  <div class="a" style="left:187.5px;top:7px;width:164.5px;height:23.8px;background:#2d2f35;border:1px solid #3b3d44;border-radius:12px"></div>
  <svg style="left:196.5px;top:14.5px" width="11" height="10.5" viewBox="0 0 11 10.5" fill="none" stroke="#e6e6e6" stroke-width="1.3"><circle cx="4.6" cy="4.6" r="3.9"/><path d="M7.5 7.4l2.9 2.7"/></svg>
  <div class="a" style="left:215px;top:13.5px;font-size:9.9px;line-height:12px;color:#d8d8d8">Search</div>
  <svg style="left:313.5px;top:8.8px" width="36" height="20.2" viewBox="0 0 36 20.2">
    <defs><linearGradient id="skyg" x1="0" y1="0" x2="0" y2="1"><stop offset="0" stop-color="#f4fafc"/><stop offset="1" stop-color="#bfe3ee"/></linearGradient>
    <linearGradient id="landg" x1="0" y1="0" x2="0" y2="1"><stop offset="0" stop-color="#9fd06a"/><stop offset="1" stop-color="#3f9a3a"/></linearGradient></defs>
    <path d="M3 10C1 10 0.5 8 2 7c0-2 2-3 3.5-2.5C6.5 2.5 9 1.5 11 2.5 12.5 0.8 15.5 0.3 17.5 1.5 19.5 0.2 23 0.5 24.5 2.2c2-0.8 4.5 0 5 2 2.5-0.3 4.3 1.3 3.8 3.3C35.5 8 35.5 10 33.5 10z" fill="url(#skyg)"/>
    <path d="M8 9V6.5h2V9M11 9V5h1.5v4M13 9V6h2v3M16 9V3.5h1.3V9M18 9V6h2.5v3M21.5 9V5h1.5v4M24 9V6.5h2.5V9" fill="#8fb8c0"/>
    <path d="M2 9.5h32c1.5 0 2 1.5 1.5 3-1 3.5-4 7-9 7.5-3 0.4-6-0.2-8.5 0.2-3 0.3-6 0.2-9-0.7C4 18.5 1.5 15.5 0.8 12.5 0.5 11 1 9.5 2 9.5z" fill="url(#landg)"/>
    <path d="M17 10c1.5 2-2 3.5-1 5.5s4 2 3 4.5" stroke="#5fc8e8" stroke-width="1.6" fill="none"/>
    <path d="M5 12c3 0.5 5 2 6 4M28 12c-2 1-3.5 3-4 5" stroke="#c8e88a" stroke-width="0.9" fill="none"/>
  </svg>
  <!-- task view -->
  <div class="a" style="left:361.2px;top:15px;width:13.8px;height:12px;background:#5e5e5e;border-radius:1.5px"></div>
  <div class="a" style="left:366px;top:10.75px;width:13.4px;height:11.9px;background:#e4e4e4;border-radius:1.5px;box-shadow:-1px 1px 0 #222"></div>
  <!-- steam -->
  <svg style="left:394.4px;top:10.75px" width="17.5" height="17" viewBox="0 0 17.5 17">
    <defs><linearGradient id="sg" x1="0" y1="0" x2="0" y2="1"><stop offset="0" stop-color="#111d3e"/><stop offset="1" stop-color="#1b74c0"/></linearGradient></defs>
    <circle cx="8.75" cy="8.5" r="8.5" fill="url(#sg)"/>
    <circle cx="11.5" cy="6" r="3.1" fill="#fff"/><circle cx="11.5" cy="6" r="1.7" fill="#1a3a6a"/>
    <path d="M0.3 8.5c1.5 0.6 3 1.2 4.3 1.9l4-3.3 2 2.3-3.8 3.5c0 1.6-1.2 2.8-2.8 2.8-1.4 0-2.5-1-2.8-2.3z" fill="#fff"/>
  </svg>
  <!-- copilot -->
  <svg style="left:427.5px;top:10.5px" width="18" height="17" viewBox="0 0 18 17">
    <defs><linearGradient id="cg1" x1="0.5" y1="0" x2="0.3" y2="1"><stop offset="0" stop-color="#2a8cf0"/><stop offset="0.5" stop-color="#3cc88c"/><stop offset="1" stop-color="#f0c030"/></linearGradient>
    <linearGradient id="cg2" x1="0.5" y1="0" x2="0.6" y2="1"><stop offset="0" stop-color="#8a5cf0"/><stop offset="0.55" stop-color="#e86ab8"/><stop offset="1" stop-color="#f89a50"/></linearGradient></defs>
    <path d="M6 0.8h5c1.3 0 1.8 1 1.3 2.2L8.5 13.5c-0.6 1.6-1.8 2.6-3.3 2.6H2.2C0.8 16.1 0.2 15 0.8 13.6L4.2 2.8C4.6 1.6 5 0.8 6 0.8z" fill="url(#cg1)"/>
    <path d="M12.8 0.8h2.2c1.3 0 2.2 0.9 2.4 2.2l0.5 5c0 1.2-0.6 1.8-1.5 1.8h-1.2l-2.8 6.3h-4.5c1.5 0 2.6-1 3.1-2.3L14 3c0.3-1-0.2-2.2-1.2-2.2z" fill="url(#cg2)"/>
  </svg>
  <!-- explorer -->
  <svg style="left:459.4px;top:10px" width="19.6" height="18" viewBox="0 0 19.6 18">
    <path d="M0 1.5C0 0.7 0.7 0 1.5 0h5l2 2h9.6c0.8 0 1.5 0.7 1.5 1.5V16.5c0 0.8-0.7 1.5-1.5 1.5H1.5C0.7 18 0 17.3 0 16.5z" fill="#e8b42a"/>
    <rect x="0" y="4" width="19.6" height="14" rx="1.2" fill="#f7d35a"/>
    <rect x="4.5" y="11" width="10.6" height="5.5" rx="1" fill="#1f7fd6"/>
  </svg>
  <div class="a" style="left:467.8px;top:31.5px;width:4.7px;height:2px;border-radius:1px;background:#9a9a9a"></div>
  <!-- firefox -->
  <svg style="left:493px;top:9.5px" width="19" height="19" viewBox="0 0 19 19">
    <defs><radialGradient id="fg" cx="0.35" cy="0.75" r="0.9"><stop offset="0" stop-color="#ff3d5a"/><stop offset="0.6" stop-color="#ff6a2a"/><stop offset="1" stop-color="#ffb52a"/></radialGradient></defs>
    <path d="M12.5 0.5c3.5 2 6 5.5 6 9.5 0 4.7-4 8.5-9 8.5S0.5 14.7 0.5 10c0-2 0.6-3.8 1.8-5.3 0.2 1 0.6 1.6 1.2 2C4.2 4 6.5 2.5 9 2.3 8 3.5 8 4.5 8.5 5.2c1-0.3 2.3-0.1 3.3 0.6 0.8-1.6 1.2-3.5 0.7-5.3z" fill="url(#fg)"/>
    <circle cx="9.3" cy="10.6" r="4.2" fill="#6b2fd8"/><circle cx="10.1" cy="10" r="2.5" fill="#9a6af0"/>
    <path d="M2.5 13c1.5 3 4 4.8 7 4.8 3.5 0 6.5-2.5 7.5-6-1.5 2.5-4 4-7 4-3 0-5.5-1-7.5-2.8z" fill="#e8233c" opacity="0.85"/>
  </svg>
  <div class="a" style="left:500.7px;top:31.5px;width:4.7px;height:2px;border-radius:1px;background:#9a9a9a"></div>
  <!-- spotify -->
  <svg style="left:527px;top:10.5px" width="17.5" height="17.5" viewBox="0 0 17.5 17.5">
    <circle cx="8.75" cy="8.75" r="8.75" fill="#1ed760"/>
    <path d="M3.6 6.3c3.5-1 7.2-0.8 10.4 1M4.2 9c2.9-0.8 6-0.6 8.6 0.9M4.7 11.5c2.3-0.6 4.7-0.4 6.8 0.7" stroke="#121212" stroke-width="1.4" stroke-linecap="round" fill="none"/>
  </svg>
  <!-- powerpoint -->
  <svg style="left:558.5px;top:10.5px" width="19.5" height="17.5" viewBox="0 0 19.5 17.5">
    <circle cx="11" cy="8.75" r="8.5" fill="#ed6c47"/>
    <path d="M11 0.25A8.5 8.5 0 0 1 19.5 8.75H11z" fill="#ff8f6b"/>
    <path d="M11 8.75h8.5A8.5 8.5 0 0 1 11 17.25z" fill="#d35230"/>
    <rect x="0" y="4" width="9.5" height="9.5" rx="1.2" fill="#c43e1c"/>
    <text x="4.75" y="11.8" font-size="8" font-weight="bold" fill="#fff" text-anchor="middle" font-family="Liberation Sans">P</text>
  </svg>
  <!-- discord -->
  <svg style="left:592.5px;top:10px" width="18.5" height="18" viewBox="0 0 18.5 18">
    <circle cx="9.25" cy="9" r="9" fill="#5865f2"/>
    <path d="M4.5 5.8c1-0.6 2-0.9 3-1l0.3 0.6c1-0.2 2-0.2 3 0l0.3-0.6c1 0.1 2 0.4 3 1 1 1.7 1.5 3.6 1.4 5.5-1 0.8-2 1.2-3 1.5l-0.6-1c0.5-0.2 0.9-0.4 1.2-0.6-1.6 0.8-4 1.2-6.6 0l1.2 0.6-0.6 1c-1-0.3-2-0.7-3-1.5-0.1-1.9 0.4-3.8 1.4-5.5z" fill="#fff"/>
    <circle cx="7.2" cy="9" r="1" fill="#5865f2"/><circle cx="11.3" cy="9" r="1" fill="#5865f2"/>
  </svg>
  <!-- whatsapp -->
  <svg style="left:625px;top:10px" width="18.5" height="18.5" viewBox="0 0 18.5 18.5">
    <path d="M9.25 1.2a7.8 7.8 0 0 0-6.7 11.8L1.3 17.2l4.3-1.1A7.8 7.8 0 1 0 9.25 1.2z" fill="none" stroke="#25d366" stroke-width="1.8"/>
    <path d="M6.5 5.8c0.4-0.4 0.9-0.4 1.1 0l0.8 1.6c0.1 0.3 0 0.6-0.3 0.9l-0.4 0.4c0.6 1.2 1.5 2.1 2.7 2.7l0.4-0.4c0.3-0.3 0.6-0.4 0.9-0.3l1.6 0.8c0.4 0.2 0.4 0.7 0 1.1-0.8 0.9-2 1.1-3.2 0.5-1.8-0.9-3.3-2.4-4.2-4.2-0.6-1.2-0.4-2.4 0.6-3.1z" fill="#25d366"/>
  </svg>
  <div class="a" style="left:635px;top:7px;width:13.3px;height:10px;border-radius:5px;background:#e8c2b8"></div>
  <div class="a" style="left:635px;top:7.3px;width:13.3px;font-size:8px;line-height:10px;text-align:center;color:#2a2020;font-weight:bold">51</div>
  <div class="a" style="left:632px;top:31.5px;width:4.7px;height:2px;border-radius:1px;background:#9a9a9a"></div>
  <!-- word (active) -->
  <div class="a" style="left:678px;top:4.5px;width:4px;height:29px;border:1px solid #3a3c44;border-left:none;border-radius:0 4px 4px 0"></div>
  <div class="a" style="left:653px;top:4px;width:25.5px;height:29.7px;background:#2c2e35;border:1px solid #3a3c44;border-radius:4px"></div>
  <svg style="left:657.5px;top:10px" width="19.5" height="17" viewBox="0 0 19.5 17">
    <rect x="4" y="0" width="15.5" height="17" rx="1.5" fill="#41a5ee"/>
    <rect x="4" y="4.25" width="15.5" height="4.25" fill="#2b7cd3"/>
    <rect x="4" y="8.5" width="15.5" height="4.25" fill="#185abd"/>
    <path d="M4 12.75h15.5v2.75c0 0.8-0.7 1.5-1.5 1.5H5.5C4.7 17 4 16.3 4 15.5z" fill="#103f91"/>
    <rect x="0" y="4" width="10" height="9.5" rx="1.2" fill="#185abd"/>
    <text x="5" y="11.8" font-size="7.8" font-weight="bold" fill="#fff" text-anchor="middle" font-family="Liberation Sans">W</text>
  </svg>
  <div class="a" style="left:661px;top:31px;width:12px;height:2.3px;border-radius:1.2px;background:#e8a8a8"></div>
  <!-- photos -->
  <svg style="left:692px;top:10px" width="17" height="17" viewBox="0 0 17 17">
    <defs><linearGradient id="pg" x1="0" y1="0" x2="1" y2="1"><stop offset="0" stop-color="#1e88d8"/><stop offset="1" stop-color="#6a5ad8"/></linearGradient></defs>
    <rect x="0" y="0" width="17" height="17" rx="2.5" fill="url(#pg)"/>
    <circle cx="12.5" cy="4" r="1.6" fill="#fff"/>
    <path d="M0 15c2-4 4-7 6.5-7s4 4 6 5 3-1 4.5-1v3c0 1.1-0.9 2-2 2H2c-1.1 0-2-0.9-2-2z" fill="#7fe0ff"/>
  </svg>
  <div class="a" style="left:699px;top:31.5px;width:4.7px;height:2px;border-radius:1px;background:#9a9a9a"></div>
  <!-- acrobat -->
  <svg style="left:725px;top:10px" width="17" height="17" viewBox="0 0 17 17">
    <rect x="0" y="0" width="17" height="17" rx="2.5" fill="#b30b00"/>
    <path d="M3 13c1.5-2.5 4-6 5-10 0.3-1 1-1 1.2 0 0.3 2-1 5 1.5 7 1.5 1 3.5 0.5 3.5 1.2S12 12 9 11.5 5.5 11 3.5 13.5" fill="none" stroke="#fff" stroke-width="1.2"/>
  </svg>
  <div class="a" style="left:731.5px;top:31.5px;width:4.7px;height:2px;border-radius:1px;background:#9a9a9a"></div>
  <!-- tray -->
  <svg style="left:800.5px;top:16.7px" width="8.5" height="5" viewBox="0 0 8.5 5" fill="none" stroke="#e6e6e6" stroke-width="1.1"><path d="M0.4 4.6l3.85-3.9 3.85 3.9"/></svg>
  <svg style="left:822.8px;top:14px" width="12.5" height="9.5" viewBox="0 0 12.5 9.5" fill="none" stroke="#e8e8e8" stroke-width="1.1"><path d="M0.5 3.2C3.7 0 8.8 0 12 3.2M2.4 5C4.5 2.9 8 2.9 10.1 5M4.2 6.8c1.1-1.1 3-1.1 4.1 0"/><circle cx="6.25" cy="8.6" r="0.8" fill="#e8e8e8"/></svg>
  <svg style="left:841px;top:14px" width="12.5" height="9.5" viewBox="0 0 12.5 9.5" fill="none" stroke="#e8e8e8" stroke-width="1.05"><path d="M0.5 3h2.5l3-2.5v8.5l-3-2.5H0.5z"/><path d="M8 3c0.8 0.9 0.8 2.6 0 3.5M9.8 1.5c1.7 1.7 1.7 4.8 0 6.5"/></svg>
  <svg style="left:858.4px;top:13px" width="13.5" height="10.5" viewBox="0 0 13.5 10.5" fill="none" stroke="#e8e8e8" stroke-width="1.05"><rect x="0.6" y="3" width="10.5" height="6.8" rx="1.2"/><path d="M11.6 5v2.8h1.2V5z" fill="#e8e8e8"/><path d="M3 0.5L1.5 3.5h2L2.5 6" stroke-width="0.9"/><rect x="2" y="6" width="8" height="2.5" fill="#e8e8e8" stroke="none" opacity="0.85"/></svg>
  <div class="a" style="left:880px;top:7.5px;width:48px;text-align:right;font-size:8.9px;line-height:11px;color:#e8e8e8;white-space:nowrap">6:48 PM</div>
  <div class="a" style="left:876px;top:19.5px;width:52px;text-align:right;font-size:9.2px;line-height:11px;color:#e8e8e8;white-space:nowrap">17-May-25</div>
  <svg style="left:934px;top:14px" width="11.5" height="11.5" viewBox="0 0 11.5 11.5" fill="none" stroke="#e8e8e8" stroke-width="1.05"><path d="M1 8.6h8.5L8.3 7V4.8C8.3 2.7 6.9 1.3 5.2 1.3S2.2 2.7 2.2 4.8V7z"/><path d="M4 10.3c0.3 0.5 0.7 0.7 1.2 0.7s0.9-0.2 1.2-0.7"/><path d="M7.5 0.5h3l-3 3h3" stroke-width="0.9"/></svg>

</div>

</body></html>
